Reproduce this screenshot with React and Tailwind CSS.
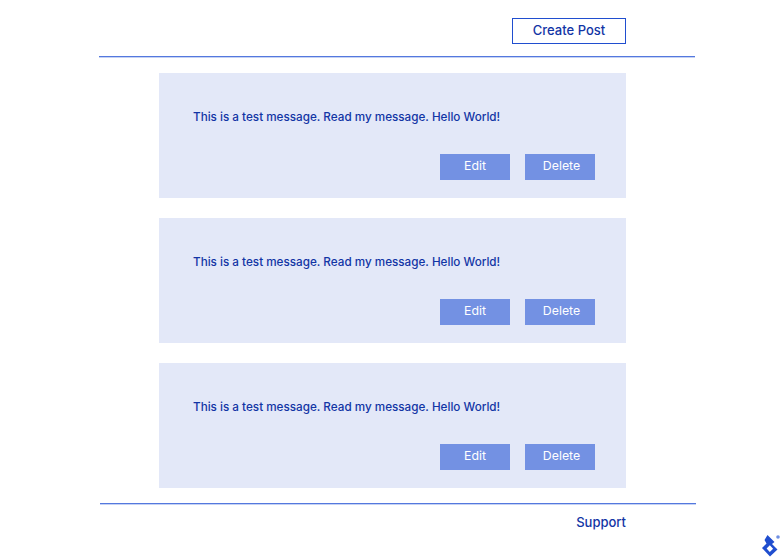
const cardPosts = [{ id: 1 }, { id: 2 }, { id: 3 }];

function Logo() {
  return (
    <svg width="20" height="24" viewBox="0 0 20 24" className="block">
      <path
        fill="#204ecf"
        fillRule="evenodd"
        d="M7.5 2L14.5 9l-2.5 2 5.5 5.5L10 23.5 2 15l4.5-4.5L4.5 7zM9.8 12.3l-3.2 3.2 3.2 3.4 3.3-3.2z"
      />
      <circle cx="18" cy="4" r="1.8" fill="#6f8fe3" />
    </svg>
  );
}

function PostCard() {
  return (
    <div className="h-[125px] bg-[#e3e8f8] pl-[34px] pr-[31px] pt-[35px]">
      <p className="text-[11.7px] font-[450] leading-[18px] text-[#1235a5]">
        This is a test message. Read my message. Hello World!
      </p>
      <div className="mt-[28px] flex justify-end gap-[15px]">
        <button className="h-[26px] w-[70px] bg-[#7391e3] pb-[1px] text-[12.3px] text-white">Edit</button>
        <button className="h-[26px] w-[70px] bg-[#7391e3] pb-[1px] pl-[3px] text-[12.3px] text-white">Delete</button>
      </div>
    </div>
  );
}

export default function App() {
  return (
    <div className="relative h-[557px] w-[780px] overflow-hidden bg-white font-['Inter',sans-serif]">
      <header className="ml-[99px] w-[596px] border-b border-[#5478de] pt-[18px] pb-[12px] shadow-[0_1px_0_#c5d2f4]">
        <div className="flex w-[527px] justify-end">
          <button className="h-[26px] w-[114px] border border-[#204ecf] text-[13px] font-medium text-[#1235a5]">
            Create Post
          </button>
        </div>
      </header>
      <main className="ml-[159px] mt-[16px] flex w-[467px] flex-col gap-[20px]">
        {cardPosts.map((post) => (
          <PostCard key={post.id} />
        ))}
      </main>
      <footer className="ml-[100px] mt-[15px] w-[596px] border-t border-[#5478de] pt-[9px] shadow-[0_1px_0_#c5d2f4_inset]">
        <div className="flex w-[526px] justify-end">
          <a className="text-[13px] font-medium leading-[18px] text-[#1235a5]">Support</a>
        </div>
      </footer>
      <div className="absolute left-[760px] top-[533px]">
        <Logo />
      </div>
    </div>
  );
}
